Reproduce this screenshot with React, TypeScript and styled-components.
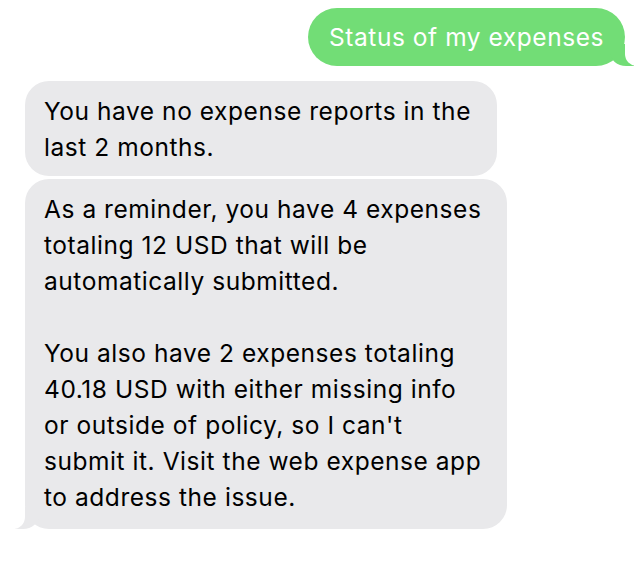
import React from "react";
import styled, { createGlobalStyle, css } from "styled-components";

const Global = createGlobalStyle`
  html, body { margin: 0; padding: 0; background: #ffffff; }
  body { font-family: Inter, "Liberation Sans", Arial, sans-serif; -webkit-font-smoothing: antialiased; }
`;

const Thread = styled.div`
  display: flex;
  flex-direction: column;
  width: 636px;
  height: 566px;
  box-sizing: border-box;
  padding: 8px 11px 0 25px;
  overflow: hidden;
`;

const Bubble = styled.div<{ $out?: boolean; $tail?: boolean; $mt?: number; $pb?: number }>`
  position: relative;
  width: fit-content;
  box-sizing: border-box;
  border-radius: 24px;
  font-size: 24.5px;
  letter-spacing: 0.55px;
  line-height: 36px;
  white-space: nowrap;
  margin-top: ${(p) => p.$mt ?? 0}px;
  ${(p) =>
    p.$out
      ? css`
          align-self: flex-end;
          background: #72dd76;
          color: #ffffff;
          padding: 11px 21px 11px 21px;
          border-radius: 30px;
        `
      : css`
          align-self: flex-start;
          background: #e9e9eb;
          color: #000000;
          padding: 12px 26px ${p.$pb ?? 11}px 19px;
        `}
  ${(p) =>
    p.$tail &&
    (p.$out
      ? css`
          &::before {
            content: "";
            position: absolute;
            bottom: 0;
            right: -9px;
            width: 24px;
            height: 22px;
            background: #72dd76;
            border-bottom-left-radius: 16px 14px;
          }
          &::after {
            content: "";
            position: absolute;
            bottom: 0;
            right: -28px;
            width: 28px;
            height: 22px;
            background: #ffffff;
            border-bottom-left-radius: 12px;
          }
        `
      : css`
          &::before {
            content: "";
            position: absolute;
            bottom: 0;
            left: -10px;
            width: 24px;
            height: 22px;
            background: #e9e9eb;
            border-bottom-right-radius: 16px 14px;
          }
          &::after {
            content: "";
            position: absolute;
            bottom: 0;
            left: -28px;
            width: 28px;
            height: 22px;
            background: #ffffff;
            border-bottom-right-radius: 12px;
          }
        `)}
`;

const Line = styled.span`
  display: block;
  min-height: 36px;
`;

const Text = styled.span`
  position: relative;
  z-index: 1;
  display: block;
`;

export default function App() {
  return (
    <>
      <Global />
      <Thread>
        <Bubble $out $tail>
          <Text>Status of my expenses</Text>
        </Bubble>
        <Bubble $mt={15}>
          <Text>
            <Line>You have no expense reports in the</Line>
            <Line>last 2 months.</Line>
          </Text>
        </Bubble>
        <Bubble $mt={3} $tail $pb={14}>
          <Text>
            <Line>As a reminder, you have 4 expenses</Line>
            <Line>totaling 12 USD that will be</Line>
            <Line>automatically submitted.</Line>
            <Line />
            <Line>You also have 2 expenses totaling</Line>
            <Line>40.18 USD with either missing info</Line>
            <Line>or outside of policy, so I can't</Line>
            <Line>submit it. Visit the web expense app</Line>
            <Line>to address the issue.</Line>
          </Text>
        </Bubble>
      </Thread>
    </>
  );
}
